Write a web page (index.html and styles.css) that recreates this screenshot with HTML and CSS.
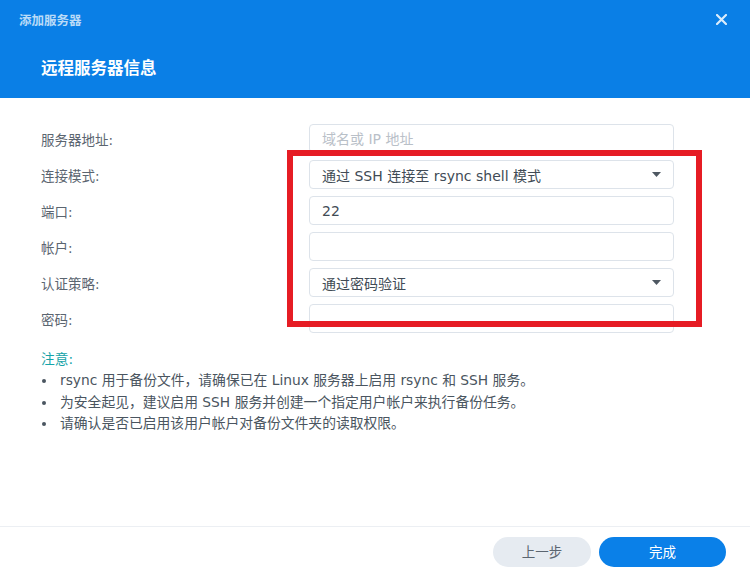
FILE: index.html
```html
<!DOCTYPE html>
<html lang="zh-CN">
<head>
<meta charset="utf-8">
<title>添加服务器</title>
<link rel="stylesheet" href="styles.css">
</head>
<body>
<div class="dialog">
  <header class="header">
    <div class="topbar">
      <span class="dialog-title">添加服务器</span>
      <svg class="close" width="11" height="11" viewBox="0 0 11 11"><path d="M1 1 L10 10 M10 1 L1 10" stroke="currentColor" stroke-width="2.2" stroke-linecap="round"/></svg>
    </div>
    <h1 class="heading">远程服务器信息</h1>
  </header>

  <main class="content">
    <div class="form">
      <label class="label">服务器地址:</label>
      <input class="field" type="text" placeholder="域名或 IP 地址">

      <label class="label">连接模式:</label>
      <div class="field select"><span>通过 SSH 连接至 rsync shell 模式</span><svg class="caret" width="9" height="5" viewBox="0 0 9 5"><path d="M0 0 H9 L4.5 5 Z" fill="currentColor"/></svg></div>

      <label class="label">端口:</label>
      <input class="field" type="text" value="22">

      <label class="label">帐户:</label>
      <input class="field" type="text" value="">

      <label class="label">认证策略:</label>
      <div class="field select"><span>通过密码验证</span><svg class="caret" width="9" height="5" viewBox="0 0 9 5"><path d="M0 0 H9 L4.5 5 Z" fill="currentColor"/></svg></div>

      <label class="label">密码:</label>
      <input class="field" type="password" value="">
    </div>

    <div class="notes">
      <div class="notes-title">注意:</div>
      <ul class="notes-list">
        <li>rsync 用于备份文件，请确保已在 Linux 服务器上启用 rsync 和 SSH 服务。</li>
        <li>为安全起见，建议启用 SSH 服务并创建一个指定用户帐户来执行备份任务。</li>
        <li>请确认是否已启用该用户帐户对备份文件夹的读取权限。</li>
      </ul>
    </div>
  </main>

  <footer class="footer">
    <button class="btn btn-secondary">上一步</button>
    <button class="btn btn-primary">完成</button>
  </footer>

  <div class="highlight"></div>
</div>
</body>
</html>
```

FILE: styles.css
```css
html, body {
  margin: 0;
  padding: 0;
  background: #ffffff;
}

body {
  font-family: "DejaVu Sans", "Noto Sans CJK SC", sans-serif;
  font-size: 14px;
  color: #414b55;
}

.dialog {
  position: relative;
  width: 750px;
  height: 577px;
  display: flex;
  flex-direction: column;
  overflow: hidden;
}

.header {
  background: #0a7fe6;
  height: 98px;
  flex: none;
}

.topbar {
  height: 38px;
  display: flex;
  align-items: center;
  justify-content: space-between;
  padding: 0 23px 0 19px;
}

.dialog-title {
  font-family: "Noto Sans CJK SC", sans-serif;
  font-size: 12.5px;
  font-weight: 700;
  color: rgba(255, 255, 255, 0.72);
}

.close {
  color: rgba(255, 255, 255, 0.85);
}

.heading {
  margin: 17px 0 0 41px;
  font-family: "Noto Sans CJK SC", sans-serif;
  font-size: 16.5px;
  line-height: 24px;
  font-weight: 700;
  color: #ffffff;
}

.content {
  flex: 1;
  padding: 26px 0 0 41px;
}

.form {
  display: grid;
  grid-template-columns: 268px 365px;
  grid-auto-rows: 29px;
  row-gap: 7px;
  align-items: center;
}

.label {
  font-size: 13.5px;
  color: #5b6570;
  padding-top: 1px;
}

.field {
  box-sizing: border-box;
  height: 29px;
  width: 365px;
  margin: 0;
  border: 1px solid #dde3ea;
  border-radius: 4px;
  padding: 0 12px;
  font: inherit;
  font-size: 14px;
  color: #414b55;
  background: #ffffff;
  outline: none;
}

.field::placeholder {
  color: #b9c0c8;
}

.select {
  display: flex;
  align-items: center;
  justify-content: space-between;
}

.caret {
  color: #4e5862;
}

.notes {
  margin-top: 15px;
}

.notes-title {
  line-height: 22px;
  color: #16a3a8;
  font-size: 13.8px;
}

.notes-list {
  list-style: none;
  margin: 0;
  padding: 0;
}

.notes-list li {
  position: relative;
  line-height: 21.5px;
  padding-left: 19px;
  color: #4a5560;
  font-size: 13.8px;
}

.notes-list li::before {
  content: "";
  position: absolute;
  left: 1px;
  top: 9px;
  width: 4px;
  height: 4px;
  border-radius: 50%;
  background: #4a5560;
}

.footer {
  flex: none;
  height: 51px;
  border-top: 1px solid #eceff3;
  display: flex;
  justify-content: flex-end;
  align-items: flex-start;
  gap: 8px;
  padding: 10px 24px 0 0;
  box-sizing: border-box;
}

.btn {
  height: 30px;
  border: none;
  border-radius: 15px;
  font-family: "Noto Sans CJK SC", sans-serif;
  font-size: 13.5px;
  line-height: 28px;
  padding: 0 0 2px;
  cursor: pointer;
}

.btn-secondary {
  width: 98px;
  background: #e6ebf1;
  color: #5b6570;
}

.btn-primary {
  width: 127px;
  background: #0a80e8;
  color: #ffffff;
}

.highlight {
  position: absolute;
  left: 287px;
  top: 150px;
  width: 415px;
  height: 177px;
  box-sizing: border-box;
  border: 6px solid #e61c24;
  pointer-events: none;
}
```
